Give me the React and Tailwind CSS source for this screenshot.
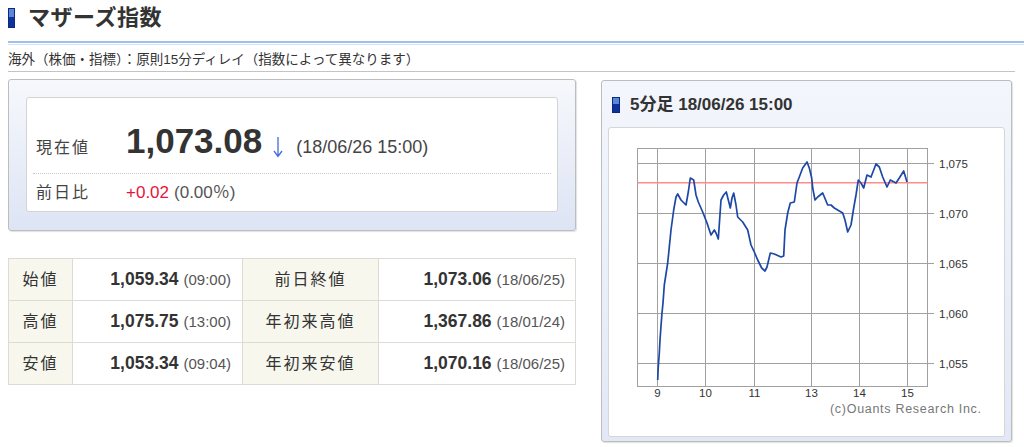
const FONT = "font-['Liberation_Sans','Noto_Sans_CJK_JP',sans-serif]";

const rows = [
  { l1: "始値", v1: "1,059.34", t1: "(09:00)", l2: "前日終値", v2: "1,073.06", t2: "(18/06/25)" },
  { l1: "高値", v1: "1,075.75", t1: "(13:00)", l2: "年初来高値", v2: "1,367.86", t2: "(18/01/24)" },
  { l1: "安値", v1: "1,053.34", t1: "(09:04)", l2: "年初来安値", v2: "1,070.16", t2: "(18/06/25)" },
];

// 5-min line, page coordinates
const line = [
  [656.7, 380], [657.2, 368], [658.3, 353], [659, 340], [660, 326], [661, 313], [662, 303],
  [663.3, 285], [666.7, 263], [670, 230], [672.7, 210], [675, 197], [676.7, 194], [680, 200],
  [685, 205], [687.3, 192], [689.3, 178], [692.7, 180], [695, 195], [697.3, 202], [701.7, 212],
  [706, 223], [710, 235], [713.3, 230], [715, 233], [717.3, 239], [720, 200], [722.7, 195],
  [725.3, 192], [729.3, 208], [731, 198], [732.7, 193], [735, 205], [736.7, 217], [741.7, 222],
  [746.7, 230], [750, 245], [753.3, 252], [756.7, 260], [760.7, 268], [764, 271], [766, 267],
  [769.3, 253], [773.3, 254], [780, 257], [782.7, 256], [784, 230], [786.7, 213], [789.3, 203],
  [793.3, 202], [796, 183], [798.3, 177], [801.7, 168], [806, 162], [808.3, 168], [810.7, 178],
  [811.7, 188], [814, 200], [816.7, 197], [821.7, 193], [826.7, 205], [830, 205], [833.3, 208],
  [841.7, 213], [844, 220], [846.7, 232], [850, 225], [852.7, 208], [855, 195], [857.3, 180],
  [860, 183], [862.7, 188], [866, 175], [870, 177], [875, 164], [878.3, 167], [881.7, 177],
  [886, 187], [889.3, 180], [895, 183], [898.3, 178], [902.7, 171], [906, 182],
];

const vLines = [656.5, 704.5, 753.5, 810.5, 858.5, 906.5];
const hLines = [
  { y: 163.5, label: "1,075" },
  { y: 213.5, label: "1,070" },
  { y: 263.5, label: "1,065" },
  { y: 313.5, label: "1,060" },
  { y: 363.5, label: "1,055" },
];
const xLabels = [
  { x: 656.5, t: "9" },
  { x: 704.5, t: "10" },
  { x: 753.5, t: "11" },
  { x: 810.5, t: "13" },
  { x: 858.5, t: "14" },
  { x: 906.5, t: "15" },
];

function BlueMark({ className }) {
  return (
    <div className={`flex flex-col border border-[#0b2a86] ${className}`}>
      <div className="h-[45%] bg-[#5b87d6]" />
      <div className="flex-1 bg-[#0d3399]" />
    </div>
  );
}

function Chart() {
  return (
    <svg width="399" height="308" viewBox="608 128 399 308" className="block">
      <rect x="636.5" y="148.5" width="290" height="238" fill="none" stroke="#a0a0a0" />
      {vLines.map((x) => (
        <line key={x} x1={x} y1="148.5" x2={x} y2="386.5" stroke="#a0a0a0" />
      ))}
      {hLines.map((h) => (
        <g key={h.y}>
          <line x1="636.5" y1={h.y} x2="933" y2={h.y} stroke="#a0a0a0" />
          <text x="938" y={h.y + 4} fontSize="11.5" fill="#333" fontFamily="Liberation Sans, sans-serif">
            {h.label}
          </text>
        </g>
      ))}
      <line x1="636.5" y1="182.7" x2="926.5" y2="182.7" stroke="#ff8c8c" strokeWidth="1.4" />
      <polyline
        points={line.map((p) => p.join(",")).join(" ")}
        fill="none"
        stroke="#1d48a6"
        strokeWidth="1.7"
        strokeLinejoin="round"
      />
      {xLabels.map((l) => (
        <text key={l.t} x={l.x} y="397" fontSize="11.5" fill="#333" textAnchor="middle" fontFamily="Liberation Sans, sans-serif">
          {l.t}
        </text>
      ))}
      <text x="829" y="413" fontSize="12.5" fill="#777" textLength="151" fontFamily="Liberation Sans, sans-serif">
        (c)Ouants Research Inc.
      </text>
    </svg>
  );
}

export default function App() {
  return (
    <div className={`w-[1024px] h-[447px] overflow-hidden bg-white text-[#333] ${FONT}`}>
      <div className="h-[41px] pl-2 pt-[8px] flex items-start gap-[13px]">
        <BlueMark className="w-[7px] h-[20px]" />
        <h1 className="text-[22px] leading-[20px] font-bold tracking-[0.5px] text-[#333]">マザーズ指数</h1>
      </div>
      <div className="ml-2 h-[2px] bg-[#9fc0ea]" />
      <div className="ml-2 mt-px h-px bg-[#d3e2f5]" />
      <p className="ml-2 mt-[6px] text-[13.5px] leading-[18px] text-[#333]">
        海外（株価・指標）：原則15分ディレイ（指数によって異なります）
      </p>
      <div className="ml-2 mr-[9px] mt-[2px] border-t border-[#c4c4c4]" />

      <div className="mt-[7px] ml-2 flex gap-[25px]">
        <div className="w-[568px]">
          <div className="rounded-[3px] border border-[#bdbdbd] bg-gradient-to-b from-[#f6f8fc] to-[#dde4f4] pt-[17px] px-[17px] pb-[18px] shadow-[1px_1px_1px_rgba(0,0,0,0.12)]">
            <div className="rounded-[3px] border border-[#d3d3d3] bg-white px-[6px]">
              <div className="h-[76px] pt-[23px] flex items-baseline border-b border-dotted border-[#c8c8c8]">
                <span className="w-[93px] pl-[3px] text-[16px] tracking-[2px] text-[#444]">現在値</span>
                <span className="text-[35px] leading-[40px] font-bold text-[#333]">1,073.08</span>
                <svg width="10" height="22" viewBox="0 0 10 22" className="ml-[11px] self-end mb-[15px]">
                  <path d="M5 1V20M1 15L5 20.5L9 15" fill="none" stroke="#4469e0" strokeWidth="1.3" />
                </svg>
                <span className="ml-[13px] text-[18px] text-[#444]">(18/06/26 15:00)</span>
              </div>
              <div className="h-[37px] flex items-center">
                <span className="w-[93px] pl-[3px] text-[16px] tracking-[2px] text-[#444]">前日比</span>
                <span className="text-[17px] text-[#e5153c]">+0.02</span>
                <span className="ml-[5px] text-[17px] text-[#555]">(0.00％)</span>
              </div>
            </div>
          </div>

          <table className="mt-[27px] w-[568px] border-collapse text-[#333]">
            <tbody>
              {rows.map((r) => (
                <tr key={r.l1} className="h-[42px]">
                  <td className="w-[64px] border border-[#dcdcd4] bg-[#f7f7ee] text-center text-[16px] tracking-[2px]">{r.l1}</td>
                  <td className="w-[170px] border border-[#dcdcd4] pr-[11px] text-right whitespace-nowrap">
                    <span className="text-[17.5px] font-bold">{r.v1}</span>
                    <span className="ml-[5px] text-[15px] text-[#555]">{r.t1}</span>
                  </td>
                  <td className="w-[136px] border border-[#dcdcd4] bg-[#f7f7ee] text-center text-[16px] tracking-[2px]">{r.l2}</td>
                  <td className="border border-[#dcdcd4] pr-[10px] text-right whitespace-nowrap">
                    <span className="text-[17.5px] font-bold">{r.v2}</span>
                    <span className="ml-[5px] text-[15px] text-[#555]">{r.t2}</span>
                  </td>
                </tr>
              ))}
            </tbody>
          </table>
        </div>

        <div className="w-[411px] mt-px">
          <div className="rounded-[3px] border border-[#bdbdbd] bg-gradient-to-b from-[#f3f6fc] to-[#e2e8f6] px-[6px] pb-[4px] shadow-[1px_1px_1px_rgba(0,0,0,0.12)]">
            <div className="h-[46px] flex items-center gap-[10px] pl-[4px] pt-px">
              <BlueMark className="w-[8px] h-[16px]" />
              <span className="text-[17px] font-bold text-[#333]">5分足 18/06/26 15:00</span>
            </div>
            <div className="rounded-[3px] border border-[#d6d6d6] bg-white">
              <Chart />
            </div>
          </div>
        </div>
      </div>
    </div>
  );
}
